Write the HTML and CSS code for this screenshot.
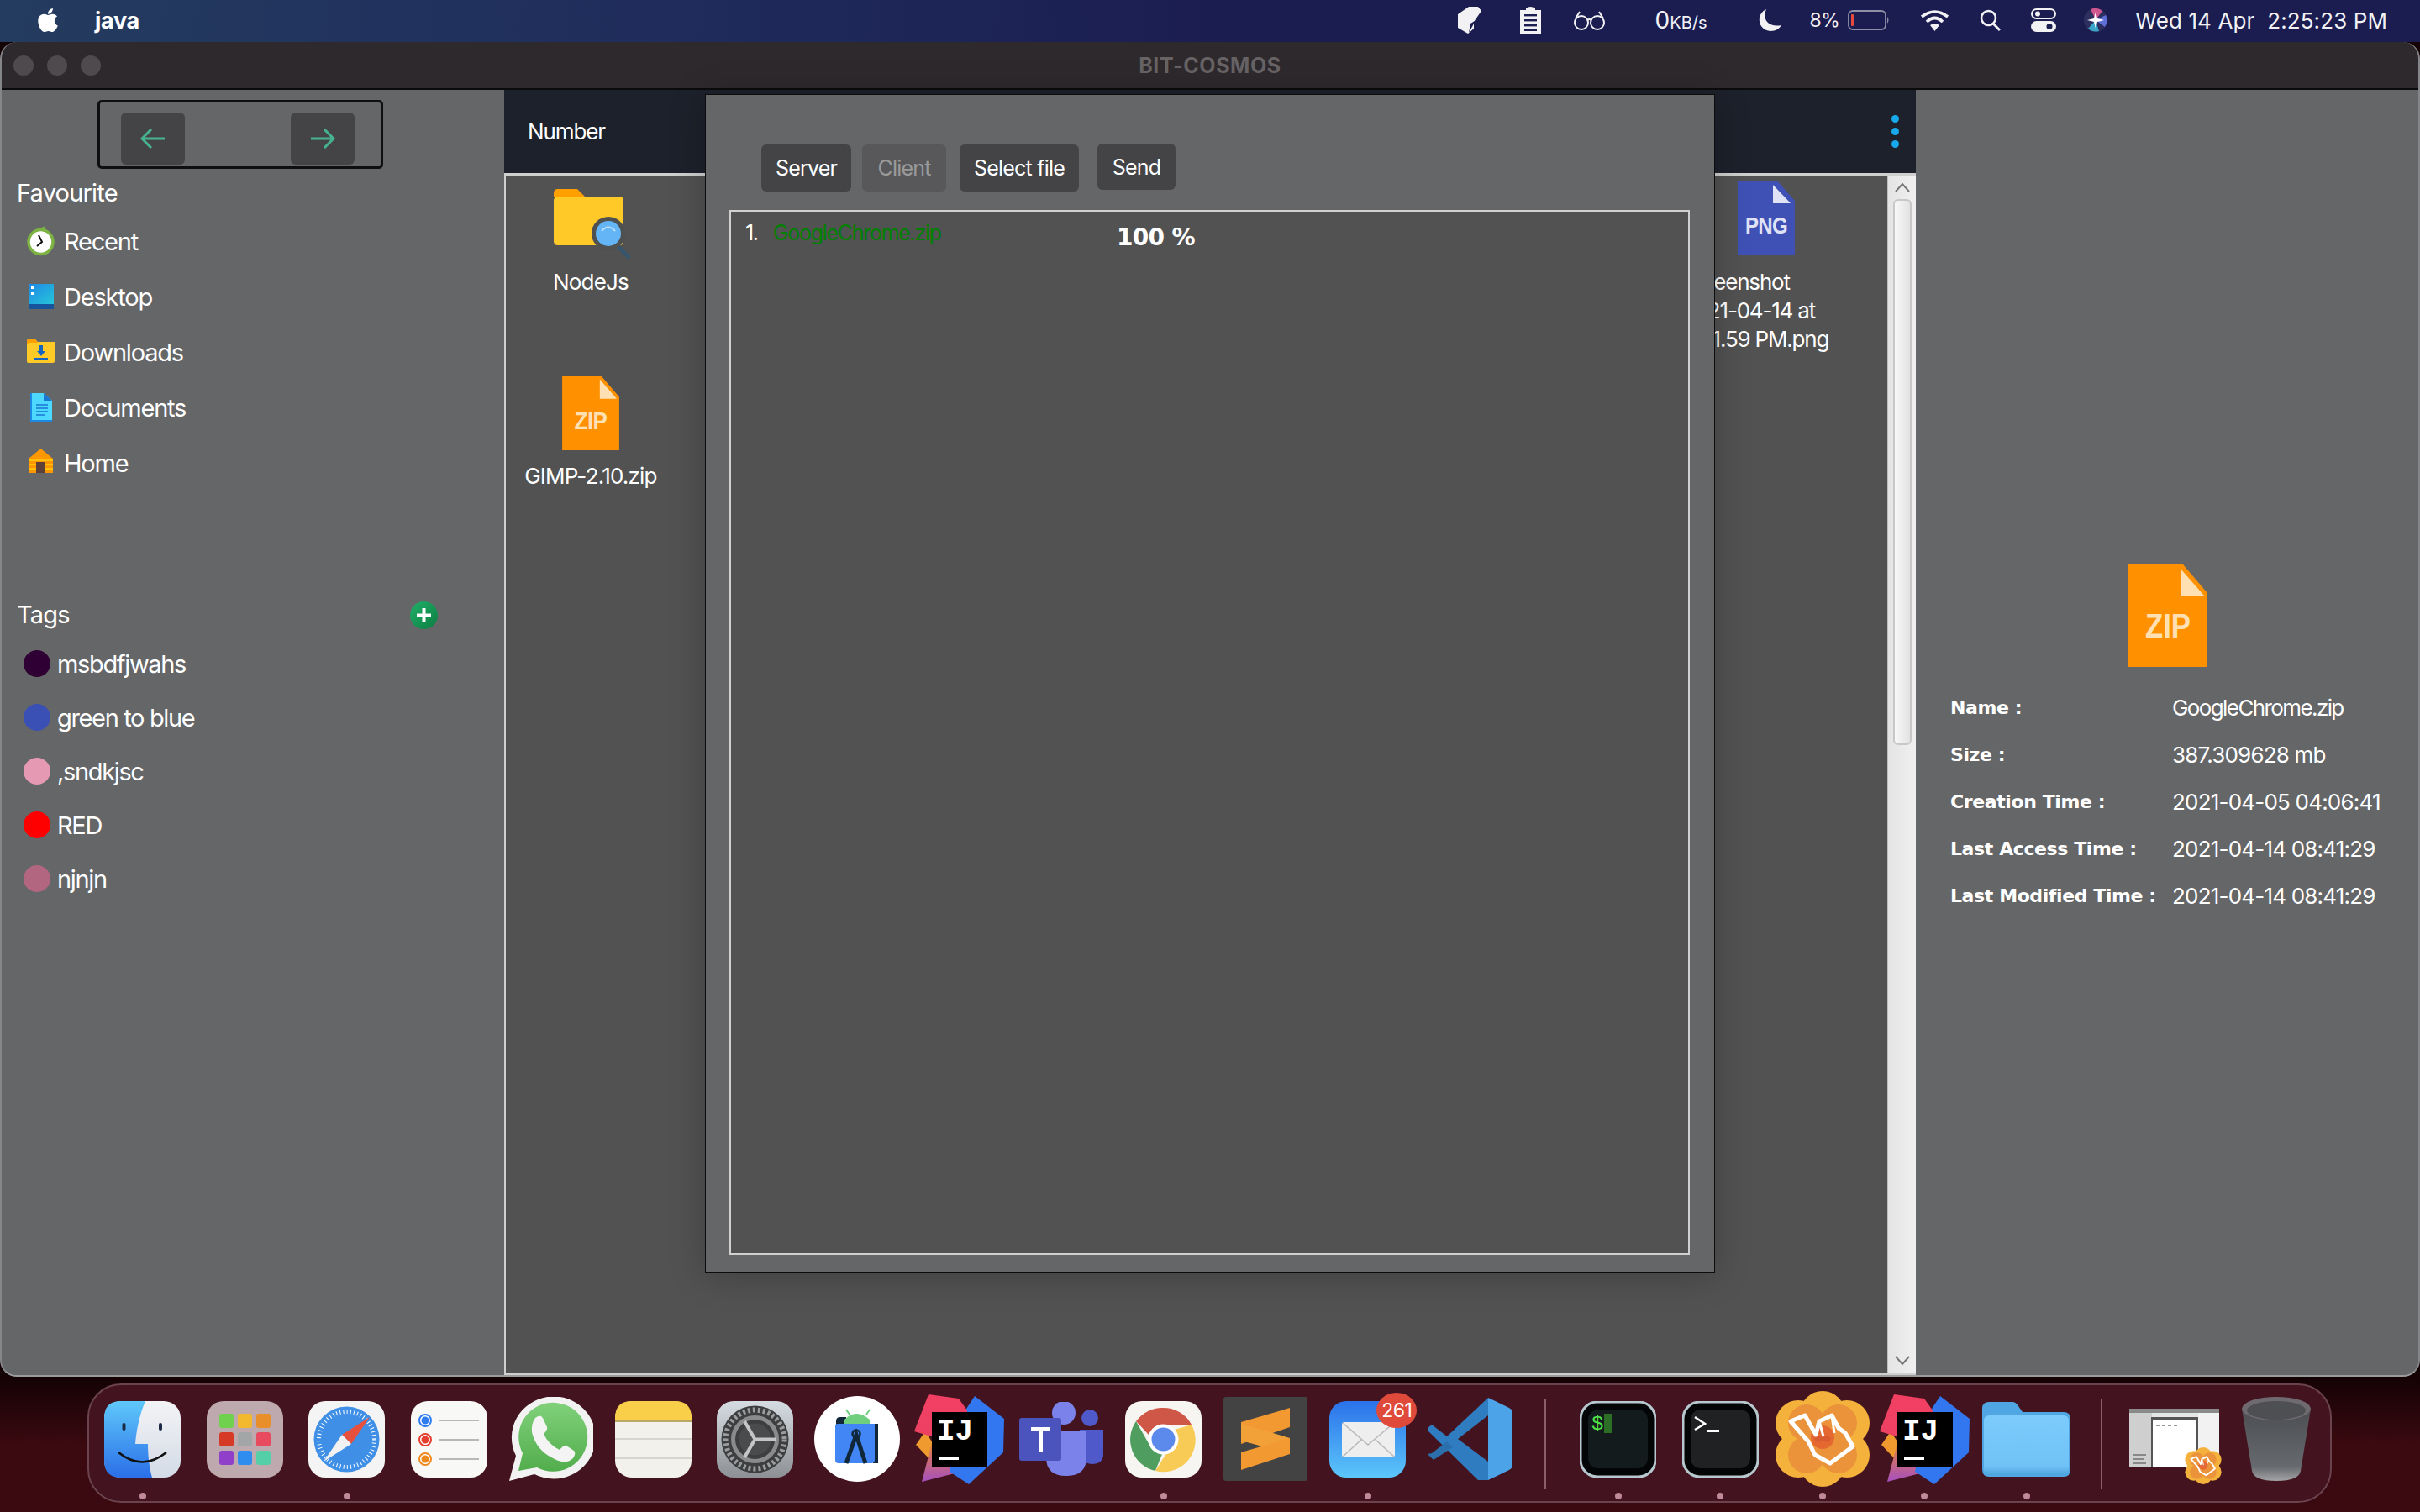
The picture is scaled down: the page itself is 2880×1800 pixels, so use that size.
FILE: index.html
```html
<!DOCTYPE html>
<html>
<head>
    <title>BIT-COSMOS</title>
    <link rel="stylesheet" href="styles.css">
</head>
<body>
    <svg class="svg-defs" aria-hidden="true">
        <defs>
            <linearGradient id="finderBlue" x1="0" y1="0" x2="0" y2="1"><stop offset="0" stop-color="#5fc8fa"/><stop offset="1" stop-color="#2a6fe8"/></linearGradient>
            <linearGradient id="finderWhite" x1="0" y1="0" x2="0" y2="1"><stop offset="0" stop-color="#f3f3f5"/><stop offset="1" stop-color="#d3dbe6"/></linearGradient>
            <linearGradient id="waGreen" x1="0" y1="0" x2="0" y2="1"><stop offset="0" stop-color="#80d17a"/><stop offset="1" stop-color="#52ad4c"/></linearGradient>
            <linearGradient id="prefsBg" x1="0" y1="0" x2="0" y2="1"><stop offset="0" stop-color="#d6dde2"/><stop offset="1" stop-color="#8d9094"/></linearGradient>
            <linearGradient id="mailBg" x1="0" y1="0" x2="0" y2="1"><stop offset="0" stop-color="#2a72ea"/><stop offset="1" stop-color="#5cc6fa"/></linearGradient>
            <linearGradient id="trashBg" x1="0" y1="0" x2="0" y2="1"><stop offset="0" stop-color="#4c4e52"/><stop offset=".8" stop-color="#66696d"/><stop offset="1" stop-color="#a2a4a6"/></linearGradient>
            <linearGradient id="folderBg" x1="0" y1="0" x2="0" y2="1"><stop offset="0" stop-color="#7ccbfb"/><stop offset=".85" stop-color="#70c2f6"/><stop offset="1" stop-color="#4da3dc"/></linearGradient>
            <linearGradient id="plusBg" x1="0" y1="0" x2="1" y2="1"><stop offset="0" stop-color="#22b06a"/><stop offset="1" stop-color="#0a7d40"/></linearGradient>
            <linearGradient id="ijTop" x1="0" y1="0" x2="0" y2="1"><stop offset="0" stop-color="#f23f63"/><stop offset="1" stop-color="#ec4162"/></linearGradient>
            <linearGradient id="ijLow" x1="0" y1="0" x2="0" y2="1"><stop offset="0" stop-color="#e8823a"/><stop offset="1" stop-color="#a64fc0"/></linearGradient>

            <symbol id="ij" viewBox="0 0 107 107">
                <polygon points="2,60 13,44 30,70 21,80" fill="#ee9a2e"/>
                <polygon points="9,104 21,58 48,94" fill="url(#ijLow)"/>
                <polygon points="72,2 107,29 106,69 65,107 42,92 60,20" fill="#3277f0"/>
                <polygon points="17,0 53,5 63,19 60,50 20,50 0,44" fill="url(#ijTop)"/>
                <rect x="21" y="21" width="66" height="65" fill="#000"/>
                <text x="27" y="54" class="ij-text">IJ</text>
                <rect x="29" y="74" width="24" height="4" fill="#fff"/>
            </symbol>

            <symbol id="hand" viewBox="0 0 114 114">
                <g fill="#f4b13c">
                    <circle cx="57" cy="27" r="27"/><circle cx="57" cy="87" r="27"/>
                    <circle cx="28" cy="38" r="27"/><circle cx="86" cy="38" r="27"/>
                    <circle cx="28" cy="76" r="27"/><circle cx="86" cy="76" r="27"/>
                </g>
                <g fill="#e8893a" opacity=".75">
                    <circle cx="38" cy="38" r="22"/><circle cx="76" cy="38" r="22"/>
                    <circle cx="38" cy="76" r="22"/><circle cx="76" cy="76" r="22"/>
                    <circle cx="57" cy="57" r="24"/>
                </g>
                <circle cx="57" cy="55" r="14" fill="#e2552e" opacity=".7"/>
                <path d="M19 36 L36 29 L49 52 L53 36 L62 32 L68 29 L76 44 L84 50 L93 66 L66 86 L48 76 L40 60 Z" fill="none" stroke="#fff" stroke-width="5" stroke-linejoin="round"/>
                <path d="M53 36 L58 54 M68 29 L71 50" fill="none" stroke="#fff" stroke-width="3"/>
            </symbol>

            <symbol id="zip" viewBox="0 0 94 122">
                <polygon points="0,0 65,0 94,34 94,122 0,122" fill="#ff9100"/>
                <polygon points="62,5 90,37 62,37" fill="#ffe0b2"/>
                <text x="47" y="87" class="zip-type" fill="#ffe0b2" textLength="54" lengthAdjust="spacingAndGlyphs">ZIP</text>
            </symbol>
        </defs>
    </svg>

    <header class="menu-bar">
        <svg class="apple-logo" viewBox="0 0 384 512"><path fill="#fff" d="M318.7 268.7c-.2-36.7 16.4-64.4 50-84.8-18.8-26.9-47.2-41.7-84.7-44.6-35.5-2.8-74.3 20.7-88.5 20.7-15 0-49.4-19.7-76.4-19.7C63.3 141.2 4 184.8 4 273.5q0 39.3 14.4 81.2c12.8 36.7 59 126.7 107.2 125.2 25.2-.6 43-17.9 75.8-17.9 31.8 0 48.3 17.9 76.4 17.9 48.6-.7 90.4-82.5 102.6-119.3-65.2-30.7-61.7-90-61.7-91.9zm-56.6-164.2c27.3-32.4 24.8-61.9 24-72.5-24.1 1.4-52 16.4-67.9 34.9-17.5 19.8-27.8 44.3-25.6 71.9 26.1 2 49.9-11.4 69.5-34.3z"/></svg>
        <span class="app-name">java</span>

        <div class="status-items">
            <svg class="si-paper" width="29" height="32" viewBox="0 0 29 32"><path fill="#f2f2f4" d="M1 9 L14 0 L25 0 L29 5 L20 18 L20 26 L13 32 L1 25 Z"/><path fill="#1c1d50" d="M14 31 L16 20 L21 17 L19 22 Z"/></svg>
            <svg class="si-clip" width="29" height="32" viewBox="0 0 29 32"><path fill="#f2f2f4" d="M2 4 H9 V2 Q14 -2 20 2 V4 H27 V32 H2 Z"/><g fill="#1c1d50"><rect x="7" y="9" width="15" height="2.4"/><rect x="7" y="15" width="15" height="2.4"/><rect x="7" y="21" width="15" height="2.4"/><rect x="7" y="27" width="15" height="2"/></g></svg>
            <svg class="si-glasses" width="39" height="24" viewBox="0 0 39 24"><g fill="none" stroke="#f2f2f4" stroke-width="2"><circle cx="10" cy="15" r="8"/><circle cx="29" cy="15" r="8"/><path d="M17 12 Q19.500 10 22 12 M3 10 L8 2 M36 10 L31 2"/></g></svg>
            <span class="si-speed"><span class="speed-num">0</span><span class="speed-unit">KB/s</span></span>
            <svg class="si-moon" width="27" height="26" viewBox="0 0 27 26"><path fill="#f2f2f4" d="M9 0 C4 12 11 22 27 19 C22 28 8 28 3 20 C-2 12 2 3 9 0 Z"/></svg>
            <span class="si-percent">8%</span>
            <svg class="si-battery" width="50" height="24" viewBox="0 0 50 24"><rect x="1" y="1" width="44" height="22" rx="5" fill="none" stroke="#8f90a8" stroke-width="1.800"/><rect x="4" y="5" width="3" height="14" rx="1" fill="#e8493f"/><path d="M47 8 Q50 12 47 16 Z" fill="#8f90a8"/></svg>
            <svg class="si-wifi" width="35" height="26" viewBox="0 0 35 26"><g fill="none" stroke="#f2f2f4" stroke-width="3.600"><path d="M2 9 Q17.500 -3 33 9"/><path d="M8 15 Q17.500 6 27 15"/></g><path fill="#f2f2f4" d="M12 19 Q17.500 15 23 19 L17.500 26 Z"/></svg>
            <svg class="si-search" width="25" height="26" viewBox="0 0 25 26"><circle cx="10.500" cy="10.500" r="8.500" fill="none" stroke="#f2f2f4" stroke-width="2.600"/><path d="M16 17 L24 25" stroke="#f2f2f4" stroke-width="3"/></svg>
            <svg class="si-toggle" width="30" height="28" viewBox="0 0 30 28"><rect x="1" y="1" width="28" height="11" rx="5.500" fill="none" stroke="#f2f2f4" stroke-width="2"/><circle cx="8" cy="6.500" r="3" fill="#f2f2f4"/><rect x="0" y="15" width="30" height="13" rx="6.500" fill="#f2f2f4"/><circle cx="22" cy="21.500" r="3.500" fill="#1c1d50"/></svg>
            <svg class="si-siri" width="28" height="28" viewBox="0 0 28 28"><circle cx="14" cy="14" r="14" fill="#2d2f5e"/><path d="M14 14 L8 1 A14 14 0 0 1 22 3 Z" fill="#d0568f"/><path d="M14 14 L26 8 A14 14 0 0 1 25 22 Z" fill="#5f6fd8"/><path d="M14 14 L18 27 A14 14 0 0 1 5 24 Z" fill="#39a6c8"/><path d="M14 4 L16 12 L24 14 L16 16 L14 24 L12 16 L4 14 L12 12 Z" fill="#fff"/></svg>
            <span class="si-date">Wed 14 Apr&nbsp; 2:25:23 PM</span>
        </div>
    </header>

    <main class="window">
        <div class="title-bar">
            <div class="traffic-lights"><span class="light"></span><span class="light"></span><span class="light"></span></div>
            <span class="window-title">BIT-COSMOS</span>
        </div>

        <div class="window-body">
            <aside class="sidebar">
                <div class="nav-box">
                    <button class="nav-btn"><svg width="30" height="24" viewBox="0 0 30 24"><path d="M13 1 L2 12 L13 23 M2 12 H29" fill="none" stroke="#46b390" stroke-width="3"/></svg></button>
                    <button class="nav-btn"><svg width="30" height="24" viewBox="0 0 30 24"><path d="M17 1 L28 12 L17 23 M28 12 H1" fill="none" stroke="#46b390" stroke-width="3"/></svg></button>
                </div>

                <h3 class="side-heading">Favourite</h3>
                <ul class="fav-list">
                    <li class="fav-item">
                        <svg class="fav-icon" viewBox="0 0 33 36"><circle cx="16.500" cy="19" r="14.500" fill="#fff" stroke="#7cb342" stroke-width="3.500"/><path d="M15 3 L22 0 L20 7 Z" fill="#7cb342"/><path d="M14 11 L18 19 L12 24" fill="none" stroke="#111" stroke-width="2"/></svg>
                        Recent
                    </li>
                    <li class="fav-item">
                        <svg class="fav-icon" viewBox="0 0 33 36"><defs><linearGradient id="deskBg" x1="0" y1="0" x2="1" y2="1"><stop offset="0" stop-color="#1e88e5"/><stop offset="1" stop-color="#26c6da"/></linearGradient></defs><rect x="2" y="3" width="30" height="24" fill="url(#deskBg)"/><rect x="2" y="27" width="30" height="6" fill="#17549b"/><rect x="5" y="6" width="3" height="3" fill="#fff"/><rect x="5" y="13" width="3" height="3" fill="#fff"/></svg>
                        Desktop
                    </li>
                    <li class="fav-item">
                        <svg class="fav-icon" viewBox="0 0 33 36"><path d="M0 5 Q0 3 2 3 H10 L13 6 H33 V29 Q33 31 31 31 H2 Q0 31 0 29 Z" fill="#ffca28"/><path d="M0 9 V5 Q0 3 2 3 H10 L13 7 H2 Z" fill="#ffa000"/><path d="M15 10 H19 V17 H22 L17 23 L12 17 H15 Z M9 25 H25 V27 H9 Z" fill="#1565c0"/></svg>
                        Downloads
                    </li>
                    <li class="fav-item">
                        <svg class="fav-icon" viewBox="0 0 33 36"><path d="M4 1 H20 L30 10 V35 H4 Z" fill="#1e88e5"/><path d="M6 1 H20 L30 10 V33 H6 Z" fill="#4dd8ff"/><path d="M20 1 L30 10 H20 Z" fill="#1976d2"/><path d="M11 15 H25 M11 19 H25 M11 23 H25 M11 27 H21" stroke="#1976d2" stroke-width="1.600"/></svg>
                        Documents
                    </li>
                    <li class="fav-item">
                        <svg class="fav-icon" viewBox="0 0 33 36"><path d="M16.500 1 L31 13 V30 H2 V13 Z" fill="#ff9800"/><path d="M2 15 H31 M2 20 H31 M2 25 H31" stroke="#ffc107" stroke-width="2"/><rect x="11" y="17" width="11" height="13" fill="#5d4037"/></svg>
                        Home
                    </li>
                </ul>

                <div class="tags-head">
                    <h3 class="side-heading">Tags</h3>
                    <svg class="add-tag" viewBox="0 0 33 33"><circle cx="16.500" cy="16.500" r="16.500" fill="url(#plusBg)"/><path d="M16.500 8 V25 M8 16.500 H25" stroke="#fff" stroke-width="4"/></svg>
                </div>
                <ul class="tag-list">
                    <li class="tag-item"><span class="tag-dot tag-purple"></span>msbdfjwahs</li>
                    <li class="tag-item"><span class="tag-dot tag-blue"></span>green to blue</li>
                    <li class="tag-item"><span class="tag-dot tag-pink"></span>,sndkjsc</li>
                    <li class="tag-item"><span class="tag-dot tag-red"></span>RED</li>
                    <li class="tag-item"><span class="tag-dot tag-rose"></span>njnjn</li>
                </ul>
            </aside>

            <section class="main-pane">
                <div class="pane-header">
                    <span class="sort-label">Number</span>
                    <div class="more-dots"><span></span><span></span><span></span></div>
                </div>
                <div class="file-area">
                    <div class="file-grid">
                        <div class="file-item">
                            <svg class="folder-icon" viewBox="0 0 92 84"><path d="M0 5 Q0 0 5 0 H28 L37 9 H0 Z" fill="#ffa000"/><path d="M0 14 Q0 9 5 9 H78 Q83 9 83 14 V62 Q83 67 78 67 H5 Q0 67 0 62 Z" fill="#ffca28"/><path d="M76 68 L90 82" stroke="#37566b" stroke-width="5"/><circle cx="65" cy="53" r="20" fill="#4f5050"/><circle cx="65" cy="53" r="15" fill="#64b5f6"/><path d="M57 50 Q65 41 73 50" fill="none" stroke="#bbdefb" stroke-width="2"/></svg>
                            <span class="file-name">NodeJs</span>
                        </div>
                        <div class="file-item file-png">
                            <svg class="png-icon" viewBox="0 0 68 88"><polygon points="0,0 47,0 68,24 68,88 0,88" fill="#3f51b5"/><polygon points="42,5 63,27 42,27" fill="#e0e2f5"/><text x="34" y="63" class="png-type" fill="#e0e2f5" textLength="50" lengthAdjust="spacingAndGlyphs">PNG</text></svg>
                            <span class="file-name png-name">Screenshot<br>2021-04-14 at<br>2.21.59 PM.png</span>
                        </div>
                        <div class="file-item file-zip">
                            <svg class="zip-small"><use href="#zip"/></svg>
                            <span class="file-name">GIMP-2.10.zip</span>
                        </div>
                    </div>
                    <div class="scrollbar">
                        <svg class="scroll-arrow" width="20" height="12" viewBox="0 0 20 12"><path d="M2 11 L10 2 L18 11" fill="none" stroke="#777" stroke-width="2"/></svg>
                        <div class="scroll-thumb"></div>
                        <svg class="scroll-arrow scroll-arrow-down" width="20" height="12" viewBox="0 0 20 12"><path d="M2 1 L10 10 L18 1" fill="none" stroke="#777" stroke-width="2"/></svg>
                    </div>
                </div>

                <div class="transfer-dialog">
                    <div class="dialog-buttons">
                        <button class="dlg-btn btn-server">Server</button>
                        <button class="dlg-btn btn-client" disabled>Client</button>
                        <button class="dlg-btn btn-select">Select file</button>
                        <button class="dlg-btn btn-send">Send</button>
                    </div>
                    <div class="transfer-list">
                        <div class="transfer-row">
                            <span class="row-num">1.</span>
                            <span class="row-name">GoogleChrome.zip</span>
                            <span class="row-percent">100 %</span>
                        </div>
                    </div>
                </div>
            </section>

            <aside class="details">
                <svg class="zip-large"><use href="#zip"/></svg>
                <dl class="detail-grid">
                    <dt>Name :</dt><dd class="detail-name">GoogleChrome.zip</dd>
                    <dt>Size :</dt><dd>387.309628 mb</dd>
                    <dt>Creation Time :</dt><dd>2021-04-05 04:06:41</dd>
                    <dt>Last Access Time :</dt><dd>2021-04-14 08:41:29</dd>
                    <dt>Last Modified Time :</dt><dd>2021-04-14 08:41:29</dd>
                </dl>
            </aside>
        </div>
    </main>

    <footer class="dock">
        <!-- finder -->
        <div class="dock-item running">
            <svg width="91" height="91" viewBox="0 0 91 91"><rect width="91" height="91" rx="20" fill="url(#finderWhite)"/><path d="M20 0 H49 C42 16 38 36 37 51 H52 C52 66 54 80 57 91 H20 Q0 91 0 71 V20 Q0 0 20 0 Z" fill="url(#finderBlue)"/><rect x="21.500" y="26" width="4" height="9" rx="2" fill="#1c2b45"/><rect x="65" y="26" width="4" height="9" rx="2" fill="#1c2b45"/><path d="M17 61 Q45 84 74 61" fill="none" stroke="#111" stroke-width="2.600"/></svg>
            <span class="dock-dot"></span>
        </div>
        <!-- launchpad -->
        <div class="dock-item">
            <svg width="91" height="91" viewBox="0 0 91 91"><rect width="91" height="91" rx="20" fill="#bda9ae"/><rect x="15" y="15" width="17" height="17" rx="3" fill="#6fd14e"/><rect x="37" y="15" width="17" height="17" rx="3" fill="#f2b82e"/><rect x="59" y="15" width="17" height="17" rx="3" fill="#e88f2b"/><rect x="15" y="37" width="17" height="17" rx="3" fill="#d63a26"/><rect x="37" y="37" width="17" height="17" rx="3" fill="#a3a6a6"/><rect x="59" y="37" width="17" height="17" rx="3" fill="#e84a5f"/><rect x="15" y="59" width="17" height="17" rx="3" fill="#8f3fc9"/><rect x="37" y="59" width="17" height="17" rx="3" fill="#2f8df0"/><rect x="59" y="59" width="17" height="17" rx="3" fill="#54cfa8"/></svg>
            <span class="dock-dot off"></span>
        </div>
        <!-- safari -->
        <div class="dock-item running">
            <svg width="91" height="91" viewBox="0 0 91 91"><rect width="91" height="91" rx="20" fill="#f4f4f4"/><circle cx="45.500" cy="45.500" r="39" fill="#3f8fe6"/><circle cx="45.500" cy="45.500" r="33" fill="none" stroke="#fff" stroke-width="5" stroke-dasharray="1 3.200"/><polygon points="73,19 40,40 51,51" fill="#e8503e"/><polygon points="18,72 40,40 51,51" fill="#f2f2f2"/></svg>
            <span class="dock-dot"></span>
        </div>
        <!-- reminders -->
        <div class="dock-item">
            <svg width="91" height="91" viewBox="0 0 91 91"><rect width="91" height="91" rx="20" fill="#f8f8f6"/><g fill="#fff" stroke-width="2"><circle cx="17" cy="23" r="7" stroke="#2f7cf0"/><circle cx="17" cy="46" r="7" stroke="#e5402f"/><circle cx="17" cy="69" r="7" stroke="#ee8a1d"/></g><circle cx="17" cy="23" r="4.500" fill="#2f7cf0"/><circle cx="17" cy="46" r="4.500" fill="#e5402f"/><circle cx="17" cy="69" r="4.500" fill="#ee8a1d"/><path d="M34 23 H81 M34 46 H81 M34 69 H81" stroke="#b8b8b8" stroke-width="2"/></svg>
            <span class="dock-dot off"></span>
        </div>
        <!-- whatsapp -->
        <div class="dock-item">
            <svg width="100" height="100" viewBox="0 0 100 100"><path d="M0 100 L8 70 A50 49 0 1 1 30 92 Z" fill="#f2f2f2"/><path d="M11 88 L16 67 A41 41 0 1 1 33 84 Z" fill="url(#waGreen)"/><path d="M31 25 Q37 20 40 25 L45 36 Q46 39 41 44 Q47 57 60 63 Q65 57 68 58 L77 64 Q80 67 76 73 Q68 81 54 74 Q32 64 27 42 Q26 32 31 25 Z" fill="#f4f4f4"/></svg>
            <span class="dock-dot off"></span>
        </div>
        <!-- notes -->
        <div class="dock-item">
            <svg width="91" height="91" viewBox="0 0 91 91"><rect width="91" height="91" rx="20" fill="#f2f1ec"/><path d="M0 23 V20 Q0 0 20 0 H71 Q91 0 91 20 V23 Z" fill="#f9cf4a"/><rect y="23" width="91" height="2" fill="#b9a866"/><path d="M0 45 H91 M0 68 H91" stroke="#d6d5d0" stroke-width="2"/></svg>
            <span class="dock-dot off"></span>
        </div>
        <!-- system preferences -->
        <div class="dock-item">
            <svg width="91" height="91" viewBox="0 0 91 91"><rect width="91" height="91" rx="20" fill="url(#prefsBg)"/><circle cx="45.500" cy="45.500" r="40" fill="#3d3e40"/><circle cx="45.500" cy="45.500" r="35" fill="none" stroke="#9b9c9e" stroke-width="6" stroke-dasharray="3 3"/><circle cx="45.500" cy="45.500" r="26" fill="none" stroke="#8a8b8d" stroke-width="5"/><circle cx="45.500" cy="45.500" r="19" fill="#4a4b4d"/><path d="M45.500 45.500 L70 45.500 M45.500 45.500 L33 24 M45.500 45.500 L33 67" stroke="#c4c5c7" stroke-width="4"/></svg>
            <span class="dock-dot off"></span>
        </div>
        <!-- android studio -->
        <div class="dock-item">
            <svg width="102" height="102" viewBox="0 0 102 102"><ellipse cx="51" cy="51" rx="51" ry="51" fill="#fff"/><path d="M26 30 Q26 25 31 25 H38 V33 H76 V80 H70 V38 H26 Z" fill="#10273a"/><path d="M36 28 Q50 14 66 28 V33 H36 Z" fill="#6fcf7f"/><path d="M38 16 L42 22 M66 16 L62 22" stroke="#6fcf7f" stroke-width="2"/><path d="M25 36 Q25 33 28 33 H72 V76 Q72 80 68 80 H29 Q25 80 25 76 Z" fill="#4285f4"/><path d="M38 80 L50 46 L61 80" fill="none" stroke="#10273a" stroke-width="5"/><circle cx="50" cy="45" r="4.500" fill="none" stroke="#10273a" stroke-width="2.500"/></svg>
            <span class="dock-dot off"></span>
        </div>
        <!-- intellij -->
        <div class="dock-item">
            <svg width="107" height="107"><use href="#ij"/></svg>
            <span class="dock-dot off"></span>
        </div>
        <!-- teams -->
        <div class="dock-item">
            <svg width="100" height="88" viewBox="0 0 100 88"><circle cx="84" cy="19" r="10" fill="#5059c9"/><path d="M72 33 H100 V62 Q100 74 86 74 Q76 74 72 62 Z" fill="#5059c9"/><circle cx="53" cy="13" r="14" fill="#7b83eb"/><path d="M32 35 H80 V66 Q80 88 56 88 Q32 88 32 66 Z" fill="#7b83eb"/><rect x="0" y="19" width="50" height="51" rx="3" fill="#4b53bc"/><path d="M14 30 H37 V35 H28 V59 H23 V35 H14 Z" fill="#fff"/></svg>
            <span class="dock-dot off"></span>
        </div>
        <!-- chrome -->
        <div class="dock-item running">
            <svg width="91" height="91" viewBox="0 0 91 91"><rect width="91" height="91" rx="20" fill="#f6f5f2"/><path d="M45.500 8 A38 38 0 0 1 79 28 H45.500 A18 18 0 0 0 28 40 L13 24 A38 38 0 0 1 45.500 8 Z" fill="#cf5748"/><path d="M13 24 L30 54 A18 18 0 0 0 44 63 L36 83 A38 38 0 0 1 13 24 Z" fill="#4f9e60"/><path d="M79 28 A38 38 0 0 1 36 83 L53 56 A18 18 0 0 0 59 34 Z" fill="#f7cb55"/><circle cx="45.500" cy="45.500" r="18" fill="#fff"/><circle cx="45.500" cy="45.500" r="14" fill="#5c89ec"/></svg>
            <span class="dock-dot"></span>
        </div>
        <!-- sublime -->
        <div class="dock-item">
            <svg width="100" height="100" viewBox="0 0 100 100"><rect width="100" height="100" rx="3" fill="#434343"/><polygon points="21,30 79,13 79,36 21,56" fill="#f29a31"/><polygon points="21,32 79,49 79,68 21,52" fill="#f2a138"/><polygon points="21,66 79,49 79,68 21,87" fill="#f29a31"/></svg>
            <span class="dock-dot off"></span>
        </div>
        <!-- mail -->
        <div class="dock-item running">
            <div class="mail-wrap">
                <svg width="91" height="91" viewBox="0 0 91 91"><rect width="91" height="91" rx="20" fill="url(#mailBg)"/><rect x="15" y="25" width="63" height="42" rx="3" fill="#eeeeee"/><path d="M16 26 L46 52 L77 26 M16 66 L38 46 M77 66 L55 46" fill="none" stroke="#b8b8b8" stroke-width="1.500"/></svg>
                <span class="mail-badge">261</span>
            </div>
            <span class="dock-dot"></span>
        </div>
        <!-- vs code -->
        <div class="dock-item">
            <svg width="101" height="100" viewBox="0 0 101 100"><path d="M72 1 L97 13 Q101 15 101 20 V80 Q101 85 97 87 L72 99 Z" fill="#4da3e8"/><path d="M72 1 L23 47 L5 33 L0 37 L0 40 L60 99 L72 99 V77 L36 50 L72 22 Z" fill="#2f7cc0"/><path d="M5 67 L23 53 L30 60 L7 75 L0 68 Z" fill="#2b6fad"/></svg>
            <span class="dock-dot off"></span>
        </div>

        <span class="dock-sep sep-one"></span>

        <!-- terminal one -->
        <div class="dock-item running">
            <svg width="91" height="91" viewBox="0 0 91 91"><rect x="1" y="1" width="89" height="89" rx="20" fill="#030506" stroke="#b7c9cf" stroke-width="3"/><rect x="10" y="10" width="71" height="70" rx="12" fill="#141b1c"/><text x="14" y="34" class="term-text term-green">$</text><rect x="29" y="15" width="10" height="23" fill="#2c6e25"/></svg>
            <span class="dock-dot"></span>
        </div>
        <!-- terminal two -->
        <div class="dock-item running">
            <svg width="91" height="91" viewBox="0 0 91 91"><rect x="1" y="1" width="89" height="89" rx="20" fill="#030506" stroke="#b7c9cf" stroke-width="3"/><rect x="10" y="10" width="71" height="70" rx="12" fill="#1f2122"/><path d="M15 19 L27 27 L15 34" fill="none" stroke="#fff" stroke-width="2.500"/><rect x="30" y="34" width="14" height="3" fill="#fff"/></svg>
            <span class="dock-dot"></span>
        </div>
        <!-- hand app -->
        <div class="dock-item running">
            <svg width="114" height="114"><use href="#hand"/></svg>
            <span class="dock-dot"></span>
        </div>
        <!-- intellij again -->
        <div class="dock-item running">
            <svg width="107" height="107"><use href="#ij"/></svg>
            <span class="dock-dot"></span>
        </div>
        <!-- folder -->
        <div class="dock-item running">
            <svg width="105" height="89" viewBox="0 0 105 89"><path d="M0 8 Q0 0 8 0 H36 Q40 0 43 5 L48 12 H97 Q105 12 105 20 V80 Q105 89 97 89 H8 Q0 89 0 80 Z" fill="#4fa6e2"/><path d="M2 22 Q2 16 9 16 H96 Q103 16 103 22 V80 Q103 87 96 87 H9 Q2 87 2 80 Z" fill="url(#folderBg)"/></svg>
            <span class="dock-dot"></span>
        </div>

        <span class="dock-sep sep-two"></span>

        <!-- minimized window -->
        <div class="dock-item">
            <div class="thumb-wrap">
                <svg width="107" height="72" viewBox="0 0 107 72"><rect width="107" height="70" fill="#e6e6e6"/><rect width="107" height="5" fill="#8a8a8a"/><rect x="0" y="5" width="27" height="65" fill="#cfcfcf"/><rect x="26" y="10" width="56" height="60" fill="#555"/><rect x="28" y="13" width="52" height="57" fill="#fff"/><rect x="82" y="5" width="25" height="65" fill="#f2f2f2"/><path d="M32 20 H60" stroke="#999" stroke-width="2" stroke-dasharray="4 3"/><path d="M4 55 H20 M4 60 H18 M4 65 H20" stroke="#888" stroke-width="2"/></svg>
                <svg class="thumb-hand" width="44" height="44"><use href="#hand"/></svg>
            </div>
            <span class="dock-dot off"></span>
        </div>
        <!-- trash -->
        <div class="dock-item">
            <svg width="82" height="100" viewBox="0 0 82 100"><path d="M0 14 L12 88 Q14 100 41 100 Q68 100 70 88 L82 14 Z" fill="url(#trashBg)"/><ellipse cx="41" cy="14" rx="41" ry="14" fill="#6f6a70"/><ellipse cx="41" cy="16" rx="35" ry="11" fill="#4e4f53"/></svg>
            <span class="dock-dot off"></span>
        </div>
    </footer>
</body>
</html>
```

FILE: styles.css
```css
* {
    box-sizing: border-box;
}

html, body {
    margin: 0;
    padding: 0;
}

body {
    width: 2880px;
    height: 1800px;
    overflow: hidden;
    font-family: Inter, "Liberation Sans", sans-serif;
    color: #fff;
    background: linear-gradient(180deg, #140205 1640px, #3a0a10 1720px);
}

ul, dl, dd, dt, h3 {
    margin: 0;
    padding: 0;
    list-style: none;
    font-weight: normal;
}

.svg-defs {
    position: absolute;
    width: 0;
    height: 0;
}

/* menu bar */
.menu-bar {
    height: 50px;
    padding-bottom: 2px;
    display: flex;
    align-items: center;
    background: linear-gradient(90deg, #243c5f 0, #1f2c5c 800px, #1b1c50 1500px);
}

.apple-logo {
    width: 26px;
    height: 32px;
    margin-left: 44px;
}

.app-name {
    margin-left: 43px;
    font-size: 27px;
    font-weight: 700;
    letter-spacing: -0.3px;
}

.status-items {
    margin-left: auto;
    padding-right: 39px;
    display: flex;
    align-items: center;
    color: #f2f2f4;
}

.si-clip { margin-left: 44px; }
.si-glasses { margin-left: 36px; }
.si-speed { margin-left: 59px; }
.si-moon { margin-left: 61px; }
.si-percent { margin-left: 34px; font-size: 23px; letter-spacing: -0.5px; }
.si-battery { margin-left: 10px; }
.si-wifi { margin-left: 36px; }
.si-search { margin-left: 36px; }
.si-toggle { margin-left: 36px; }
.si-siri { margin-left: 33px; }
.si-date { margin-left: 33px; font-size: 26px; letter-spacing: 0.1px; }

.speed-num { font-size: 28px; }
.speed-unit { font-size: 20px; }

/* window */
.window {
    height: 1589px;
    display: flex;
    flex-direction: column;
    border-radius: 20px;
    overflow: hidden;
    background: #656668;
    border-left: 2px solid #85868a;
    border-right: 2px solid #85868a;
    border-bottom: 2px solid #9a9b9d;
}

.title-bar {
    height: 57px;
    flex: none;
    position: relative;
    display: flex;
    align-items: center;
    justify-content: center;
    background: #2e292c;
    border-bottom: 2px solid #0b0b0b;
}

.traffic-lights {
    position: absolute;
    left: 14px;
    top: 16px;
    display: flex;
    gap: 16px;
}

.light {
    width: 24px;
    height: 24px;
    border-radius: 50%;
    background: #4f4a4d;
}

.window-title {
    font-size: 25px;
    font-weight: 700;
    color: #676365;
    letter-spacing: 0.6px;
}

.window-body {
    flex: 1;
    display: flex;
    min-height: 0;
}

/* sidebar */
.sidebar {
    width: 598px;
    flex: none;
    background: #656668;
    font-size: 29px;
    letter-spacing: -1.2px;
}

.nav-box {
    width: 340px;
    height: 82px;
    margin: 12px 0 0 114px;
    padding: 12px 31px 0 25px;
    display: flex;
    justify-content: space-between;
    border: 3px solid #0f0f10;
    border-radius: 5px;
}

.nav-btn {
    width: 76px;
    height: 62px;
    padding: 0;
    display: flex;
    align-items: center;
    justify-content: center;
    border: none;
    border-radius: 6px;
    background: #444446;
}

.side-heading {
    font-size: 29px;
    line-height: 36px;
    margin-left: 18px;
    letter-spacing: -0.8px;
}

.nav-box + .side-heading {
    margin-top: 11px;
}

.fav-list {
    margin-top: 6px;
}

.fav-item {
    height: 66px;
    padding-left: 30px;
    display: flex;
    align-items: center;
    gap: 11px;
}

.fav-icon {
    width: 33px;
    height: 36px;
}

.tags-head {
    margin-top: 130px;
    display: flex;
    align-items: center;
    justify-content: space-between;
    padding-right: 79px;
}

.add-tag {
    width: 33px;
    height: 33px;
}

.tag-list {
    margin-top: 8px;
}

.tag-item {
    height: 64px;
    padding-left: 26px;
    display: flex;
    align-items: center;
    gap: 8px;
    letter-spacing: -1.35px;
}

.tag-dot {
    width: 32px;
    height: 32px;
    border-radius: 50%;
}

.tag-purple { background: #2e0033; }
.tag-blue { background: #3b50b5; }
.tag-pink { background: #e699b3; }
.tag-red { background: #ff0000; }
.tag-rose { background: #b36680; }

/* centre pane */
.main-pane {
    width: 1680px;
    flex: none;
    position: relative;
    display: flex;
    flex-direction: column;
}

.pane-header {
    height: 99px;
    flex: none;
    padding: 0 20px 0 28px;
    display: flex;
    align-items: center;
    justify-content: space-between;
    background: #1d212b;
}

.sort-label {
    font-size: 26px;
    letter-spacing: -1.1px;
}

.more-dots {
    display: flex;
    flex-direction: column;
    gap: 6px;
}

.more-dots span {
    width: 9px;
    height: 9px;
    border-radius: 50%;
    background: #18a9ec;
}

.file-area {
    flex: 1;
    display: flex;
    min-height: 0;
    background: #525252;
    border-top: 3px solid #cfcfcf;
    border-left: 2px solid #cfcfcf;
    border-bottom: 3px solid #cfcfcf;
}

.file-grid {
    flex: 1;
    padding-top: 6px;
    display: grid;
    grid-template-columns: 202px 1fr 212px 38px;
    grid-auto-rows: 233px;
    align-content: start;
    font-size: 26px;
    letter-spacing: -0.8px;
    line-height: 34px;
}

.file-item {
    display: flex;
    flex-direction: column;
    align-items: center;
    text-align: center;
}

.file-png {
    grid-column: 3;
    grid-row: 1;
}

.png-name {
    align-self: flex-start;
    padding-left: 6px;
    text-align: left;
    white-space: nowrap;
    letter-spacing: -1.2px;
}

.file-zip {
    grid-column: 1;
    grid-row: 2;
}

.folder-icon {
    width: 92px;
    height: 84px;
    margin: 10px 0 10px 3px;
}

.png-icon {
    width: 68px;
    height: 88px;
    margin-bottom: 16px;
}

.zip-small {
    width: 68px;
    height: 88px;
    margin-bottom: 14px;
}

.zip-type {
    font-family: "Liberation Sans", sans-serif;
    font-size: 40px;
    font-weight: 700;
    text-anchor: middle;
}

.png-type {
    font-family: "Liberation Sans", sans-serif;
    font-size: 28px;
    font-weight: 700;
    text-anchor: middle;
}

.scrollbar {
    width: 34px;
    flex: none;
    position: relative;
    padding-top: 8px;
    display: flex;
    flex-direction: column;
    align-items: center;
    background: linear-gradient(90deg, #e4e4e4, #f0f0f0);
    border-left: 1px solid #bdbdbd;
}

.scroll-thumb {
    width: 22px;
    height: 650px;
    margin-top: 8px;
    border: 2px solid #c8c8c8;
    border-radius: 6px;
    background: linear-gradient(90deg, #f8f8f8, #e2e2e2);
}

.scroll-arrow-down {
    margin-top: auto;
    margin-bottom: 8px;
}

/* transfer dialog, sits over the file area */
.transfer-dialog {
    position: absolute;
    left: 239px;
    top: 5px;
    width: 1202px;
    height: 1403px;
    padding: 59px 29px 0 28px;
    background: #656668;
    border: 1px solid #0c0c0e;
    box-shadow: 0 4px 40px rgba(0, 0, 0, 0.22);
}

.dialog-buttons {
    height: 78px;
    padding-left: 38px;
    display: flex;
    align-items: flex-start;
    font-size: 25px;
}

.dlg-btn {
    height: 56px;
    padding: 0;
    border: none;
    border-radius: 6px;
    background: #444446;
    color: #fff;
    font-family: inherit;
    font-size: 25px;
    letter-spacing: -0.8px;
}

.btn-server { width: 107px; }
.btn-client { width: 100px; margin-left: 13px; background: #58585a; color: #9a9a9a; }
.btn-select { width: 142px; margin-left: 16px; }
.btn-send { width: 93px; height: 55px; margin-left: 22px; margin-top: -1px; }

.transfer-list {
    height: 1244px;
    padding: 8px 0 0 17px;
    display: flex;
    align-items: flex-start;
    background: #525252;
    border: 2px solid #d0d0d0;
}

.transfer-row {
    display: flex;
    font-size: 25px;
    letter-spacing: -1.3px;
    line-height: 34px;
}

.row-num {
    width: 33px;
}

.row-name {
    width: 409px;
    color: #008000;
}

.row-percent {
    margin-top: 6px;
    font-family: "DejaVu Sans", sans-serif;
    font-size: 28px;
    font-weight: 700;
    letter-spacing: -0.7px;
}

/* details */
.details {
    flex: 1;
    padding-top: 565px;
    display: flex;
    flex-direction: column;
    background: #656668;
}

.zip-large {
    width: 94px;
    height: 122px;
    align-self: center;
    margin-left: 2px;
}

.detail-grid {
    margin-top: 20px;
    padding-left: 41px;
    display: grid;
    grid-template-columns: 264px 1fr;
    grid-auto-rows: 56px;
    align-items: center;
    font-size: 26px;
    letter-spacing: -0.8px;
}

.detail-grid .detail-name {
    letter-spacing: -1.6px;
}

.detail-grid dt {
    font-family: "DejaVu Sans", sans-serif;
    font-size: 22px;
    font-weight: 700;
    letter-spacing: -0.4px;
}

/* dock */
.dock {
    width: 2671px;
    height: 142px;
    margin: 8px 0 0 104px;
    padding: 0 0 0 3px;
    display: flex;
    background: #43141f;
    border: 2px solid #6a434e;
    border-radius: 40px;
}

.dock-item {
    width: 121.5px;
    flex: none;
    display: flex;
    flex-direction: column;
    align-items: center;
}

.dock-item > svg,
.mail-wrap,
.thumb-wrap {
    margin-top: auto;
    margin-bottom: auto;
}

.dock-dot {
    width: 8px;
    height: 8px;
    flex: none;
    margin: 0 0 2px;
    border-radius: 50%;
    background: #c08a9b;
}

.dock-dot.off {
    background: transparent;
}

.dock-sep {
    width: 2px;
    height: 108px;
    flex: none;
    align-self: flex-start;
    margin-top: 16px;
    background: #8a5f69;
}

.sep-one { margin-left: 28px; margin-right: 25px; }
.sep-two { margin-left: 27px; margin-right: 25px; }

.mail-wrap {
    position: relative;
    width: 91px;
    height: 91px;
}

.mail-badge {
    position: absolute;
    left: 56px;
    top: -10px;
    width: 48px;
    height: 42px;
    display: flex;
    align-items: center;
    justify-content: center;
    border-radius: 50%;
    background: #e04a3b;
    font-size: 23px;
    letter-spacing: -0.5px;
}

.thumb-wrap {
    position: relative;
    width: 107px;
    height: 72px;
}

.thumb-hand {
    position: absolute;
    left: 66px;
    top: 46px;
}

.ij-text {
    font-family: "Liberation Mono", monospace;
    font-size: 36px;
    font-weight: 700;
    fill: #fff;
}

.term-text {
    font-family: "Liberation Mono", monospace;
    font-size: 24px;
}

.term-green {
    fill: #4fe04a;
}
```
